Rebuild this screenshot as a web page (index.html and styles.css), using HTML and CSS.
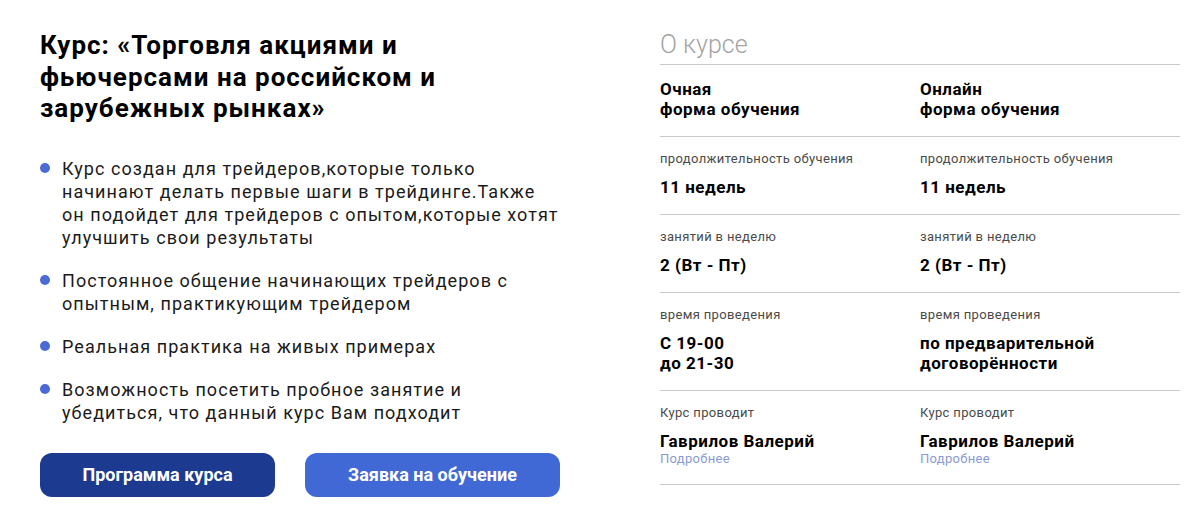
FILE: index.html
```html
<!DOCTYPE html>
<html lang="ru">
<head>
<meta charset="utf-8">
<title>Курс</title>
<link rel="stylesheet" href="styles.css">
</head>
<body>
<div class="page">
  <section class="intro">
    <h1 class="title">Курс: «Торговля акциями и фьючерсами на российском и зарубежных рынках»</h1>
    <ul class="features">
      <li>Курс создан для трейдеров,которые только начинают делать первые шаги в трейдинге.Также он подойдет для трейдеров с опытом,которые хотят улучшить свои результаты</li>
      <li>Постоянное общение начинающих трейдеров с опытным, практикующим трейдером</li>
      <li>Реальная практика на живых примерах</li>
      <li>Возможность посетить пробное занятие и убедиться, что данный курс Вам подходит</li>
    </ul>
    <div class="actions">
      <a class="btn btn-dark" href="#">Программа курса</a>
      <a class="btn btn-light" href="#">Заявка на обучение</a>
    </div>
  </section>
  <section class="about">
    <h2 class="about-title">О курсе</h2>
    <div class="row">
      <div class="cell"><div class="value">Очная<br>форма обучения</div></div>
      <div class="cell"><div class="value">Онлайн<br>форма обучения</div></div>
    </div>
    <div class="row">
      <div class="cell"><div class="label">продолжительность обучения</div><div class="value">11 недель</div></div>
      <div class="cell"><div class="label">продолжительность обучения</div><div class="value">11 недель</div></div>
    </div>
    <div class="row">
      <div class="cell"><div class="label">занятий в неделю</div><div class="value">2 (Вт - Пт)</div></div>
      <div class="cell"><div class="label">занятий в неделю</div><div class="value">2 (Вт - Пт)</div></div>
    </div>
    <div class="row">
      <div class="cell"><div class="label">время проведения</div><div class="value">С 19-00<br>до 21-30</div></div>
      <div class="cell"><div class="label">время проведения</div><div class="value">по предварительной<br>договорённости</div></div>
    </div>
    <div class="row">
      <div class="cell"><div class="label">Курс проводит</div><div class="value">Гаврилов Валерий</div><a class="more" href="#">Подробнее</a></div>
      <div class="cell"><div class="label">Курс проводит</div><div class="value">Гаврилов Валерий</div><a class="more" href="#">Подробнее</a></div>
    </div>
  </section>
</div>
</body>
</html>
```

FILE: styles.css
```css
* { box-sizing: border-box; }

body {
  margin: 0;
  background: #ffffff;
  font-family: Roboto, "Noto Sans", "Liberation Sans", sans-serif;
  color: #111111;
}

.page {
  display: flex;
  gap: 90px;
  padding: 30px 24px 0 40px;
}

.intro {
  width: 530px;
  flex: none;
}

.title {
  margin: 0;
  font-size: 26px;
  line-height: 31.5px;
  font-weight: 700;
  letter-spacing: 1px;
  color: #000000;
  width: 500px;
}

.features {
  list-style: none;
  margin: 32px 0 0;
  padding: 0;
  width: 520px;
}

.features li {
  position: relative;
  padding-left: 22px;
  font-size: 18px;
  line-height: 23px;
  letter-spacing: 1.05px;
  color: #1a1a1a;
}

.features li + li {
  margin-top: 20px;
}

.features li::before {
  content: "";
  position: absolute;
  left: 0;
  top: 6.5px;
  width: 10px;
  height: 10px;
  border-radius: 50%;
  background: #4a6ad6;
}

.actions {
  display: flex;
  gap: 30px;
  margin-top: 29px;
}

.btn {
  display: flex;
  align-items: center;
  justify-content: center;
  height: 44px;
  border-radius: 12px;
  color: #ffffff;
  text-decoration: none;
  font-size: 18px;
  font-weight: 700;
}

.btn-dark {
  width: 235px;
  background: #1d3a91;
}

.btn-light {
  width: 255px;
  background: #4169d6;
}

.about {
  width: 520px;
  flex: none;
}

.about-title {
  margin: 0;
  font-size: 25px;
  line-height: 30px;
  font-weight: 300;
  color: #a3a3a3;
  padding-bottom: 4px;
  border-bottom: 1px solid #c9c9c9;
}

.row {
  display: grid;
  grid-template-columns: 260px 260px;
  padding: 14px 0 17px;
  border-bottom: 1px solid #c9c9c9;
}

.label {
  font-size: 13px;
  line-height: 16px;
  font-weight: 400;
  letter-spacing: 0.35px;
  color: #4a4a4a;
  margin-bottom: 10px;
}

.value {
  font-size: 17px;
  line-height: 20px;
  font-weight: 700;
  letter-spacing: 0.5px;
  color: #000000;
}

.more {
  display: block;
  font-size: 13px;
  line-height: 16px;
  letter-spacing: 0.3px;
  color: #8a9ad4;
  text-decoration: none;
}
```
